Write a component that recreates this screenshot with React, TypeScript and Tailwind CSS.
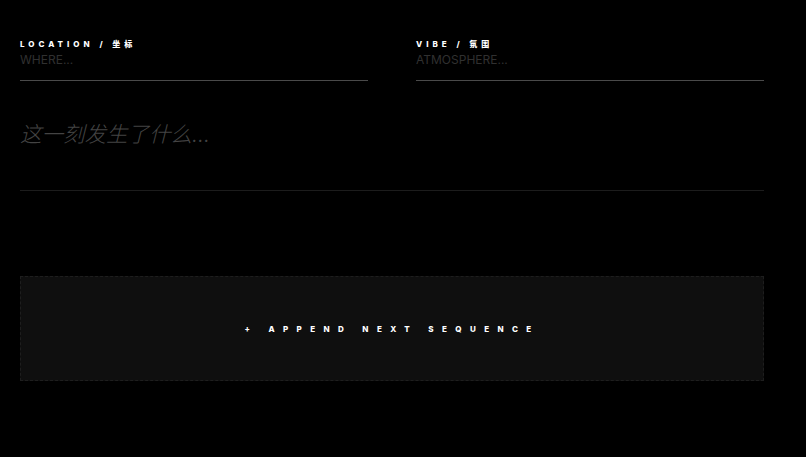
export default function App() {
  return (
    <div className="min-h-screen bg-black px-5 pt-[39px] font-['Inter','Noto_Sans_CJK_SC',sans-serif]">
      <div className="w-[744px]">
        <div className="grid grid-cols-2 gap-12">
          <div>
            <label className="block text-[8px] leading-[10px] font-extrabold tracking-[0.5em] text-white">
              LOCATION / 坐标
            </label>
            <input
              placeholder="WHERE..."
              className="block w-full border-b border-[#4a4a4a] bg-transparent pt-[3px] pb-[13px] text-[12px] leading-[15px] text-white outline-none placeholder:text-[#303030]"
            />
          </div>
          <div>
            <label className="block text-[8px] leading-[10px] font-extrabold tracking-[0.5em] text-white">
              VIBE / 氛围
            </label>
            <input
              placeholder="ATMOSPHERE..."
              className="block w-full border-b border-[#4a4a4a] bg-transparent pt-[3px] pb-[13px] text-[12px] leading-[15px] text-white outline-none placeholder:text-[#303030]"
            />
          </div>
        </div>
        <textarea
          placeholder="这一刻发生了什么..."
          className="mt-[38px] block h-[72px] w-full resize-none border-b border-[#1c1c1c] bg-transparent text-[21.5px] leading-[30px] font-light italic text-white outline-none placeholder:text-[#444]"
        />
        <button className="mt-[85px] flex h-[105px] w-full items-center justify-center border border-dashed border-[#1e1e1e] bg-[#0f0f0f] text-[8px] font-extrabold tracking-[1.05em] text-white">
          + APPEND NEXT SEQUENCE
        </button>
      </div>
    </div>
  );
}
